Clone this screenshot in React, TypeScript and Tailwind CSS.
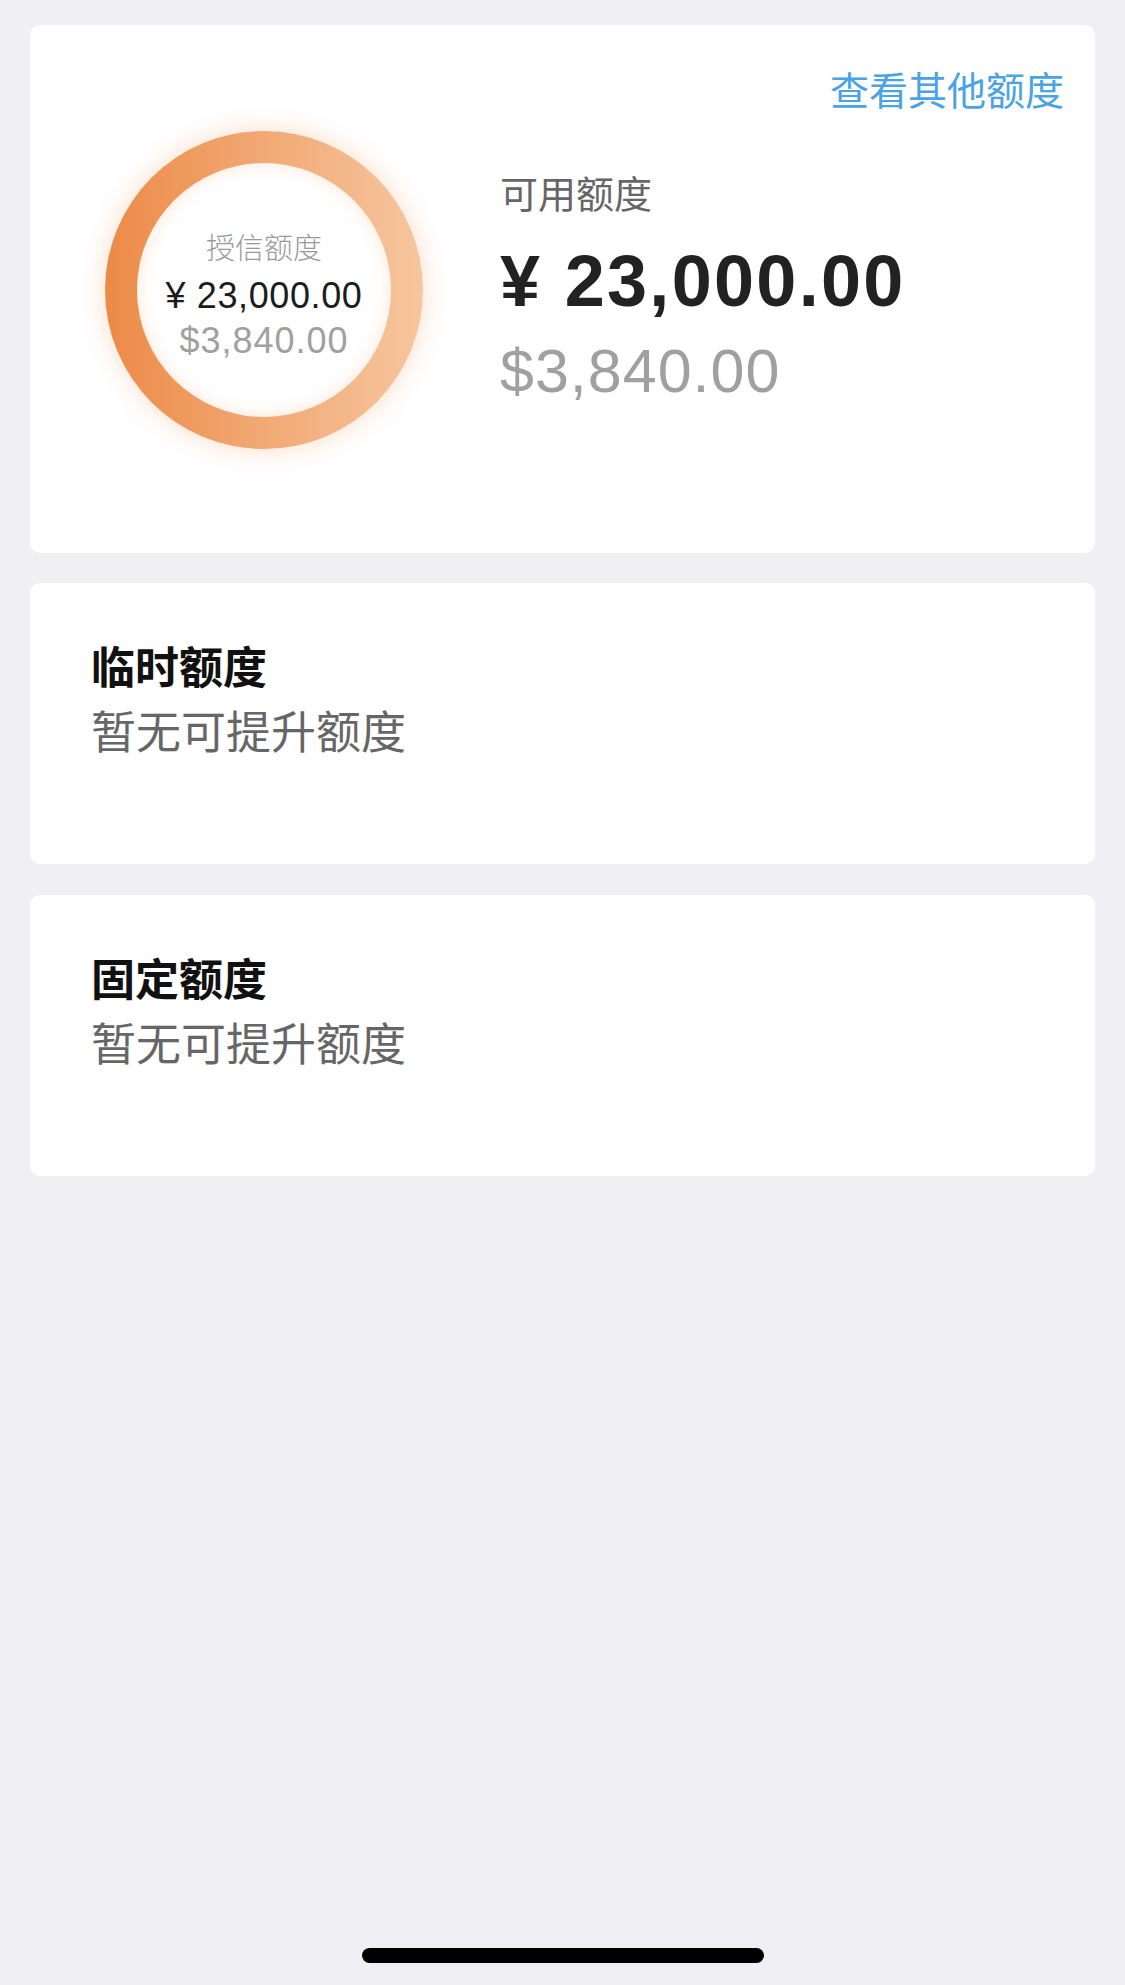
import React from 'react';

const font = "font-['Liberation_Sans','Noto_Sans_CJK_SC',sans-serif]";

function QuotaRing() {
  return (
    <div className="w-[318px] h-[318px] shrink-0 rounded-full p-[32px] bg-linear-to-r from-[#EC8A46] to-[#F6C69E] shadow-[0_0_26px_rgba(240,140,70,0.30)]">
      <div className="w-full h-full rounded-full bg-white shadow-[inset_0_0_18px_rgba(240,140,70,0.22)] flex flex-col items-center justify-center pt-[14px]">
        <div className="text-[29px] leading-[36px] font-light text-[#9a9a9a]">授信额度</div>
        <div className="mt-[7px] text-[36px] leading-[44px] text-[#1c1c1c] tracking-[0.6px]">¥ 23,000.00</div>
        <div className="mt-[1px] text-[36px] leading-[44px] text-[#a0a0a0] tracking-[1px]">$3,840.00</div>
      </div>
    </div>
  );
}

function EmptyQuotaCard({ title }: { title: string }) {
  return (
    <div className="bg-white rounded-[10px] h-[281px] pl-[61px] pt-[60px]">
      <div className="text-[44px] leading-[52px] font-bold text-[#111]">{title}</div>
      <div className="mt-[12px] text-[45px] leading-[54px] text-[#666]">暂无可提升额度</div>
    </div>
  );
}

export default function App() {
  return (
    <div className={`${font} min-h-[1985px] bg-[#EFEFF4] flex flex-col px-[30px] pt-[25px]`}>
      <div className="bg-white rounded-[10px] h-[528px] flex flex-col">
        <div className="flex justify-end pr-[31px] pt-[43px]">
          <button className="text-[39px] leading-[47px] text-[#4AA3E4]">查看其他额度</button>
        </div>
        <div className="flex items-center pl-[75px] mt-[16px]">
          <QuotaRing />
          <div className="ml-[77px] flex flex-col">
            <div className="text-[38px] leading-[46px] text-[#666]">可用额度</div>
            <div className="mt-[20px] text-[72px] leading-[86px] font-bold text-[#222] tracking-[2.3px]">¥ 23,000.00</div>
            <div className="mt-[10px] text-[61px] leading-[74px] text-[#a0a0a0] tracking-[1px]">$3,840.00</div>
          </div>
        </div>
      </div>

      <div className="mt-[30px] flex flex-col gap-[31px]">
        <EmptyQuotaCard title="临时额度" />
        <EmptyQuotaCard title="固定额度" />
      </div>

      <div className="mt-auto mb-[22px] flex justify-center">
        <div className="w-[402px] h-[15px] rounded-full bg-black" />
      </div>
    </div>
  );
}
